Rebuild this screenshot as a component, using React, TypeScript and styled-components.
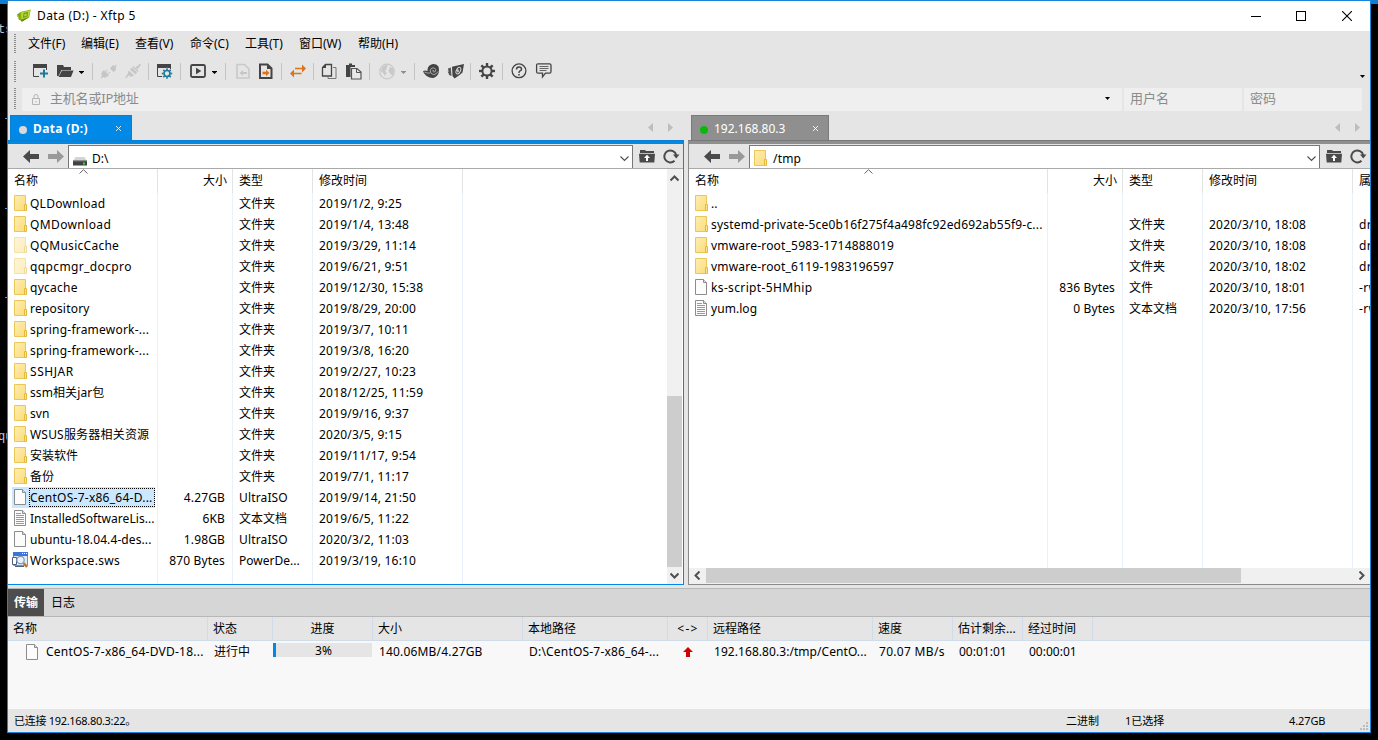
import React from "react";
import styled, { createGlobalStyle, css } from "styled-components";

const GlobalStyle = createGlobalStyle`
  html, body { margin: 0; padding: 0; background: #000; }
  body { width: 1378px; height: 740px; overflow: hidden; }
  * { box-sizing: border-box; }
  svg { display: block; flex: none; }
`;

/* ---------- shell ---------- */

const Desktop = styled.div`
  display: flex;
  width: 1378px;
  height: 740px;
  overflow: hidden;
  background: linear-gradient(#0e7fd3 4px, #000 4px);
  font-family: "Noto Sans", "Noto Sans CJK SC", sans-serif;
  font-size: 12px;
  line-height: 20px;
  color: #000;
  white-space: pre;
`;

const Terminal = styled.div`
  width: 7px;
  flex: none;
  overflow: hidden;
  display: flex;
  flex-direction: column;
  padding-top: 20px;
  font-family: "Liberation Mono", monospace;
  font-size: 12px;
  line-height: 20px;
  color: #c4c4d0;
`;

const TermLine = styled.span<{ $gap?: number }>`
  height: 20px;
  margin-left: -2px;
  margin-bottom: ${(p) => p.$gap ?? 0}px;
`;

const TermTick = styled.i<{ $gap: number }>`
  width: 2px;
  height: 1px;
  flex: none;
  align-self: flex-end;
  background: #5b8fc0;
  margin-bottom: ${(p) => p.$gap}px;
`;

const Window = styled.div`
  width: 1364px;
  height: 733px;
  flex: none;
  display: flex;
  flex-direction: column;
  background: #e5e5e5;
  border: 1px solid #1883d7;
  overflow: hidden;
`;

const T = styled.span<{ $ls?: number; $ml?: number }>`
  letter-spacing: ${(p) => p.$ls ?? 0}px;
  margin-left: ${(p) => p.$ml ?? 0}px;
  flex: none;
`;

/* ---------- title bar ---------- */

const TitleBar = styled.div`
  height: 30px;
  flex: none;
  display: flex;
  align-items: center;
  background: #fff;
  padding-left: 8px;
`;

const Title = styled(T)`
  margin-left: 5px;
  flex: 1;
`;

const Caption = styled.div`
  width: 46px;
  height: 30px;
  display: flex;
  align-items: center;
  justify-content: center;
`;

/* ---------- menu, toolbar, address bar ---------- */

const Grip = styled.i<{ $h: number; $mr: number }>`
  width: 2px;
  height: ${(p) => p.$h}px;
  flex: none;
  margin: 0 ${(p) => p.$mr}px 0 6px;
  background: repeating-linear-gradient(#8c8c8c 0 1px, #e5e5e5 1px 2px);
`;

const MenuBar = styled.div`
  height: 26px;
  flex: none;
  display: flex;
  align-items: center;
`;

const MenuItem = styled.span<{ $w: number }>`
  width: ${(p) => p.$w}px;
`;

const ToolBar = styled.div`
  height: 29px;
  flex: none;
  display: flex;
  align-items: center;
`;

const Tool = styled.span<{ $w: number; $dim?: boolean }>`
  width: ${(p) => p.$w}px;
  flex: none;
  color: ${(p) => (p.$dim ? "#c6c6c6" : "#444")};
`;

const Sep = styled.i<{ $w: number }>`
  width: ${(p) => p.$w}px;
  height: 17px;
  flex: none;
  background: linear-gradient(to right, #c3c3c3 1px, transparent 1px);
`;

const Overflow = styled.span`
  margin-left: auto;
  align-self: flex-end;
  padding: 0 5px 8px 0;
`;

const AddressBar = styled.div`
  height: 27px;
  flex: none;
  display: flex;
  align-items: center;
  padding-bottom: 1px;
`;

const AddrField = styled.div<{ $w: number; $pl: number }>`
  width: ${(p) => p.$w}px;
  height: 23px;
  flex: none;
  display: flex;
  align-items: center;
  margin-right: 2px;
  padding: 0 12px 2px ${(p) => p.$pl}px;
  background: #efefef;
  color: #8b8b8b;
  font-size: 13px;
`;

const LockSvg = styled.svg`
  margin-top: 3px;
`;

const Grow = styled.span`
  flex: 1;
`;

/* ---------- panes ---------- */

const Panes = styled.div`
  height: 472px;
  flex: none;
  display: flex;
`;

const Pane = styled.section<{ $w: number; $ml?: number }>`
  width: ${(p) => p.$w}px;
  margin-left: ${(p) => p.$ml ?? 0}px;
  flex: none;
  display: flex;
  flex-direction: column;
  min-width: 0;
`;

const TabRow = styled.div<{ $pl: number; $pr: number }>`
  height: 27px;
  flex: none;
  display: flex;
  align-items: flex-end;
  padding: 0 ${(p) => p.$pr}px 0 ${(p) => p.$pl}px;
`;

const Tab = styled.div<{ $w: number; $remote?: boolean }>`
  width: ${(p) => p.$w}px;
  height: 25px;
  display: flex;
  align-items: center;
  padding: 1px 10px 0 8px;
  color: #fff;
  background: ${(p) => (p.$remote ? "#8f8f8f" : "#0089e6")};
  border: 1px solid ${(p) => (p.$remote ? "#7a7a7a" : "#0a7fd0")};
  border-bottom: 0;
  font-weight: ${(p) => (p.$remote ? 400 : 700)};
`;

const Dot = styled.i<{ $c: string }>`
  width: 8px;
  height: 8px;
  margin: 2px 6px 0 0;
  border-radius: 50%;
  background: ${(p) => p.$c};
`;

const TabArrows = styled.div`
  margin-left: auto;
  height: 25px;
  display: flex;
  align-items: center;
  gap: 15px;
`;

const PaneFrame = styled.div<{ $remote?: boolean }>`
  flex: 1;
  min-height: 0;
  display: flex;
  flex-direction: column;
  border: 0 solid ${(p) => (p.$remote ? "#8a8a8a" : "#0089e6")};
  border-bottom-width: 1px;
  border-top: 1px solid ${(p) => (p.$remote ? "#777" : "#0a7fd0")};
  ${(p) =>
    p.$remote
      ? css`
          border-left-width: 1px;
        `
      : css`
          border-right-width: 1px;
        `}
`;

const Stripe = styled.i<{ $remote?: boolean }>`
  height: 3px;
  flex: none;
  background: ${(p) => (p.$remote ? "#8f8f8f" : "#0089e6")};
`;

const NavRow = styled.div<{ $pl: number }>`
  height: 25px;
  flex: none;
  display: flex;
  align-items: flex-end;
  padding-left: ${(p) => p.$pl}px;
  border-bottom: 1px solid #a9a9a9;
`;

const NavIcon = styled.span<{ $w: number }>`
  width: ${(p) => p.$w}px;
  height: 24px;
  flex: none;
  display: flex;
  align-items: center;
`;

const PathBox = styled.div<{ $w: number }>`
  width: ${(p) => p.$w}px;
  height: 23px;
  flex: none;
  display: flex;
  align-items: center;
  padding: 3px 3px 0 4px;
  background: #fff;
  border: 1px solid #777;
  border-bottom: 0;
`;

const PathIcon = styled.span<{ $mt: number; $mb: number }>`
  margin: ${(p) => p.$mt}px 0 ${(p) => p.$mb}px;
`;

const ListArea = styled.div`
  flex: 1;
  min-height: 0;
  display: flex;
  background: #fff;
`;

const List = styled.div`
  flex: 1;
  min-width: 0;
  display: flex;
  flex-direction: column;
  overflow: hidden;
`;

const Row = styled.div<{ $remote?: boolean; $kind?: "head" | "fill" }>`
  display: grid;
  grid-template-columns: ${(p) => (p.$remote ? 359 : 150)}px 75px 80px 150px 60px;
  flex: ${(p) => (p.$kind === "fill" ? "1" : "none")};
  height: ${(p) => (p.$kind === "fill" ? "auto" : p.$kind === "head" ? "24px" : "21px")};
`;

const Cell = styled.div<{ $right?: boolean; $head?: boolean; $last?: boolean }>`
  display: flex;
  align-items: center;
  justify-content: ${(p) => (p.$right ? "flex-end" : "flex-start")};
  padding: 0 ${(p) => (p.$head ? 5 : 7)}px 0 6px;
  border-right: ${(p) => (p.$last ? 0 : 1)}px solid ${(p) => (p.$head ? "#e3e3e3" : "#e8f1fc")};
`;

const NameCell = styled(Cell)`
  padding: 0 2px 0 4px;
`;

const HeadName = styled(Cell)`
  position: relative;
`;

const SortMark = styled.span`
  position: absolute;
  top: 0;
  left: 50%;
  margin-left: -4px;
`;

const NameBox = styled.div<{ $sel?: boolean }>`
  height: 21px;
  display: flex;
  align-items: center;
  background: ${(p) => (p.$sel ? "#cce8ff" : "transparent")};
`;

const NameText = styled.span<{ $sel?: boolean; $ls: number }>`
  height: 19px;
  line-height: 17px;
  width: ${(p) => (p.$sel ? "126px" : "auto")};
  letter-spacing: ${(p) => p.$ls}px;
  border: 1px dotted ${(p) => (p.$sel ? "#000" : "transparent")};
`;

const VScroll = styled.div`
  width: 15px;
  margin-right: 1px;
  flex: none;
  display: flex;
  flex-direction: column;
  background: #f0f0f0;
`;

const VThumb = styled.i`
  margin-top: 209px;
  height: 171px;
  background: #cdcdcd;
`;

const HScroll = styled.div`
  height: 16px;
  flex: none;
  display: flex;
  background: #f0f0f0;
`;

const HThumb = styled.i`
  width: 535px;
  height: 15px;
  background: #cdcdcd;
`;

const ScrollBtn = styled.span<{ $w: number; $h: number }>`
  width: ${(p) => p.$w}px;
  height: ${(p) => p.$h}px;
  flex: none;
  display: flex;
  align-items: center;
  justify-content: center;
`;

/* ---------- transfer panel ---------- */

const BottomTabs = styled.div`
  height: 29px;
  margin-top: 3px;
  flex: none;
  display: flex;
  border: solid #b7b7b7;
  border-width: 1px 0;
  background: #d6d6d6;
`;

const BottomTab = styled.span<{ $active?: boolean }>`
  padding: 4px ${(p) => (p.$active ? 6 : 7)}px 0;
  font-weight: ${(p) => (p.$active ? 700 : 400)};
  color: ${(p) => (p.$active ? "#fff" : "#000")};
  background: ${(p) => (p.$active ? "#4d4d4d" : "transparent")};
`;

const TRow = styled.div<{ $head?: boolean }>`
  display: grid;
  grid-template-columns: 200px 65px 100px 150px 145px 40px 165px 80px 70px 70px;
  height: ${(p) => (p.$head ? 24 : 21)}px;
  flex: none;
  border-bottom: ${(p) => (p.$head ? 1 : 0)}px solid #d0dcea;
`;

const TCell = styled.div<{ $head?: boolean; $pl?: number; $center?: boolean; $ls?: number }>`
  display: flex;
  align-items: center;
  justify-content: ${(p) => (p.$center ? "center" : "flex-start")};
  padding-left: ${(p) => p.$pl ?? 5}px;
  letter-spacing: ${(p) => p.$ls ?? 0}px;
  border-right: 1px solid ${(p) => (p.$head ? "#d0dcea" : "transparent")};
`;

const TBody = styled.div`
  flex: 1;
  background: #f8f8f8;
`;

const Progress = styled.div`
  width: 99px;
  height: 14px;
  margin-top: -3px;
  padding: 2px 0 0 2px;
  display: flex;
  align-items: center;
  justify-content: center;
  background: linear-gradient(to right, #0089e6 3px, #e5e5e5 3px);
`;

const StatusBar = styled.div`
  height: 23px;
  flex: none;
  display: flex;
  align-items: center;
  padding: 0 2px 0 6px;
  font-size: 11px;
`;

const StatusItem = styled.span<{ $w?: number; $ls?: number }>`
  width: ${(p) => (p.$w ? p.$w + "px" : "auto")};
  flex: ${(p) => (p.$w ? "none" : "1")};
  letter-spacing: ${(p) => p.$ls ?? 0}px;
`;

const ResizeGrip = styled.span`
  align-self: flex-end;
  margin-left: auto;
  padding-bottom: 2px;
`;

/* ---------- drawings ---------- */

const Logo = () => (
  <svg width="16" height="16" viewBox="0 0 16 16">
    <path d="M1 6.500 4.500 4 5 12 3 12Z" fill="#7da51c" />
    <path d="M.500 7.500 2.500 7.500 3.500 11.500Z" fill="#a7cf2a" />
    <path d="M4.300 4 14.800 1.500 13.200 9.500 5.500 13.500 3.800 11.500Z" fill="#86b115" />
    <path d="M5.300 4.500 14.300 2.300 12.500 8.800 5.500 11.500Z" fill="#b9dc3c" />
    <path d="M8 5.500 11.500 4.700 11 8 7.500 9.200Z" fill="none" stroke="#7ca414" strokeWidth="1.300" />
    <path d="M4.500 12 12.800 9.500 6 13.700Z" fill="#5f880f" />
  </svg>
);

const Caret = ({ c = "#000" }: { c?: string }) => (
  <svg width="5" height="17" viewBox="0 0 5 17">
    <path d="M0 8h5v.6L2.500 11 0 8.600Z" fill={c} />
  </svg>
);

const SmallCaret = () => (
  <svg width="5" height="3" viewBox="0 0 5 3">
    <path d="M0 0h5L2.500 3Z" fill="#000" />
  </svg>
);

const frame = (
  <>
    <path d="M1 1h14v4H1Z" fill="#444" />
    <path d="M1.500 4v9.500H7M14.500 4v3" stroke="#444" fill="none" />
  </>
);

const gearTeeth = (cx: number, cy: number, r0: number, r1: number, w: number) =>
  [0, 45, 90, 135, 180, 225, 270, 315].map((a) => (
    <path
      key={a}
      d={`M${cx} ${cy - r0}V${cy - r1}`}
      strokeWidth={w}
      transform={`rotate(${a} ${cx} ${cy})`}
    />
  ));

const icons: Record<string, React.ReactNode> = {
  newWindow: (
    <>
      {frame}
      <path d="M11 6.500h2v8h-2ZM8 9.500h8v2H8Z" fill="#1b7b9c" />
    </>
  ),
  open: (
    <>
      <path d="M0 2h6l1 2h7v3H4.500L1.500 13H0Z" fill="#444" />
      <path d="M5 7.500h11.500L14 14H1.500Z" fill="#444" />
    </>
  ),
  link: (
    <g fill="currentColor">
      <path d="M10 5.500 13 2l1.500 1.200L16 1.500l.8.8-1.200 1.800Q17 6 15 8l-1.500 1Z" />
      <path d="m2.500 8.500 1.500-1.500 5 5-1.500 1.500Q5 15.500 3.200 14L1.500 15.500.700 14.700 2 13Q.500 11 2.500 8.500Z" />
      <path d="m5.500 8 1.500-1.500.8.8L6.500 8.800ZM8 10.300l1.500-1.500.8.8L8.800 11Z" />
    </g>
  ),
  unlink: (
    <g fill="currentColor">
      <path d="M7 4.500 12 9.500 10.500 11.500 5 6.500ZM10.500 4.500 15 .700 16 1.700 12.200 6.500ZM5 10.500 1.200 15.500.200 14.500 3.500 9.500Z" />
      <path d="M8.500 3 13.500 8l-1 1-5-5ZM4 7.500 9 12.500 7 13.500Q5 14 3.500 12T4 7.500Z" />
    </g>
  ),
  winGear: (
    <>
      {frame}
      <circle cx="11" cy="10.500" r="5.800" fill="#e5e5e5" />
      <g stroke="#1b7b9c" fill="none">
        <circle cx="11" cy="10.500" r="3" strokeWidth="1.700" />
        {gearTeeth(11, 10.5, 3.5, 5.2, 1.6)}
      </g>
    </>
  ),
  play: (
    <>
      <rect x="1" y="2" width="14" height="12" rx="1.500" fill="none" stroke="#444" strokeWidth="1.800" />
      <path d="M6 4.700 11.300 8 6 11.300Z" fill="#444" />
    </>
  ),
  docIn: (
    <>
      <path d="M1 1.500h7.500L13 6v9H1Z" fill="none" stroke="#c9c9c9" strokeWidth="1.600" />
      <path d="M3.500 10 7 7v2h4v2H7v2Z" fill="#c6c6c6" />
    </>
  ),
  docOut: (
    <>
      <path d="M1 1.500h7.500L12.500 5.500V15H1Z" fill="none" stroke="#444" strokeWidth="2" />
      <path d="M8 1v5h5Z" fill="#444" />
      <path d="M10.500 10 7 6.800v2H3.500v2.400H7v2Z" fill="#de7417" />
    </>
  ),
  swap: (
    <g fill="#de7417">
      <path d="M16 5.500 12 1.500v3.200H5v1.600H12v3.200Z" />
      <path d="M0 10.500 4 6.500v3.200h7.500v1.600H4v3.200Z" />
    </g>
  ),
  copy: (
    <>
      <path d="M4.500 1.500H10.500V13H1.500V4.500Z" fill="none" stroke="#444" strokeWidth="1.300" />
      <path d="M1 5 5 1v4Z" fill="#444" />
      <path d="M12 4.500h3V15.500H7V14" fill="none" stroke="#777" />
    </>
  ),
  paste: (
    <>
      <path d="M0 2h3V.500h3V2h3v2H4.500v10H0Z" fill="#444" />
      <path d="M5.500 5.500H11L15 9v7H5.500Z" fill="#e9e9e9" stroke="#555" strokeWidth="1.200" />
      <path d="M10.500 5.500V9.500H15" fill="none" stroke="#555" />
    </>
  ),
  globe: (
    <>
      <circle cx="8" cy="8.500" r="7.300" fill="none" stroke="#c9c9c9" strokeWidth="1.200" />
      <path d="M3 4.500 6.500 2 9 2.500 7.500 4.500 8 6 6 7.500 7.500 9.500 6 13 4.500 10.500 1.500 8ZM11 4l3 1 1 4-1.500 3.500L11 10.500 9.500 8Z" fill="#c9c9c9" />
    </>
  ),
  shell: (
    <>
      <path d="M0 8.500Q1 7 4.500 8 4 3 9 1.200 13 .500 15.500 3.500L16 7Q16 13 10.500 15 3.500 15.500 0 8.500Z" fill="#444" />
      <path d="M10.700 7.500Q9.500 6.700 9.800 8.200 10.600 9.700 12.300 8.500 13.600 6.500 11.500 5 8.500 4 7.200 7 7 11 10.500 11.700 13.500 11.500 15 8.500M1.500 9Q4 10.500 7 10" fill="none" stroke="#c0c0c0" strokeWidth=".8" />
    </>
  ),
  leaf: (
    <>
      <path d="M4 3.800 16 1 14.500 9.500Q12 12 6.500 15.500L4.500 13Z" fill="#444" />
      <path d="M0 5.500 2.800 4.500 3.500 13 1 12ZM-.500 8.500 1.500 9.500V12Z" fill="#555" />
      <ellipse cx="10.200" cy="7.500" rx="2" ry="3.600" transform="rotate(25 10 8)" fill="none" stroke="#ddd" />
      <path d="M9.900 6v3.500M8.800 8h2.300" stroke="#ddd" />
    </>
  ),
  gear: (
    <g stroke="#444" fill="none">
      <circle cx="8" cy="8" r="4.600" strokeWidth="2" />
      {gearTeeth(8, 8, 5, 8, 2.4)}
    </g>
  ),
  help: (
    <>
      <circle cx="8" cy="7.800" r="6.900" fill="none" stroke="#444" strokeWidth="1.300" />
      <path d="M5.500 6.500Q5.500 4 8 4T10.500 6.200Q10.500 7.300 8.700 8.200 8 8.600 8 10" fill="none" stroke="#444" strokeWidth="1.500" />
      <path d="M7.200 11h1.600v1.500H7.200Z" fill="#444" />
    </>
  ),
  chat: (
    <>
      <path d="M2 .8H13.500Q15 .8 15 2.300V8.700Q15 10.200 13.500 10.200H9.500L6.500 14V10.200H2Q.600 10.200.600 8.700V2.300Q.600.8 2 .8Z" fill="none" stroke="#444" strokeWidth="1.300" />
      <path d="M3.500 3.500h9M3.500 5.500h9M3.500 7.500h7" stroke="#555" strokeWidth=".9" />
    </>
  ),
};

const Icon = ({ n }: { n: string }) => (
  <svg width="18" height="17" viewBox="0 0 18 17" overflow="visible">
    {icons[n]}
  </svg>
);

const Folder = () => (
  <svg width="14" height="16" viewBox="0 0 14 16">
    <defs>
      <linearGradient id="fold" x1="0" y1="0" x2="1" y2="1">
        <stop offset="0" stopColor="#ffeeb0" />
        <stop offset="1" stopColor="#fbdc7b" />
      </linearGradient>
    </defs>
    <path d="M.500.500H11.500V15.500H.500Z" fill="url(#fold)" stroke="#ebc75a" />
    <path d="M10.500 9.500H12.500V15.500H10.500Z" fill="#fde58e" stroke="#e5b93c" />
  </svg>
);

const Faded = styled.span`
  display: block;
  opacity: 0.5;
`;

const FileIcon = ({ lines }: { lines?: boolean }) => (
  <svg width="14" height="16" viewBox="0 0 14 16">
    <path d="M.500.500H8.500L11.500 3.500V15.500H.500Z" fill="#fcfcfc" stroke="#8c8c8c" />
    <path d="M8.500.500V3.500H11.500" fill="#ddd" stroke="#8c8c8c" />
    {lines && <path d="M2 3.500h5M2 5.500h8M2 7.500h8M2 9.500h8M2 11.500h8M2 13.500h8" stroke="#999" />}
  </svg>
);

const AppFile = () => (
  <svg width="16" height="16" viewBox="0 0 16 16">
    <path d="M1.500.500H15.500V13.500H1.500Z" fill="#dfeafa" stroke="#6d8fd0" />
    <path d="M1 0H16V4H1Z" fill="#3e74d8" />
    <path d="M10 1.500h1M12 1.500h1M14 1.500h1" stroke="#fff" />
    <path d="M.500 5.500h4v7h-4Z" fill="#fff" stroke="#4c5f86" />
    <path d="m11.500 11 3.500 4" stroke="#b87a30" strokeWidth="2.500" />
    <path d="M3 14.500h9" stroke="#55617c" />
    <circle cx="8.500" cy="8" r="3.700" fill="#e6f3fd" stroke="#8796b0" strokeWidth="1.200" />
  </svg>
);

const Drive = () => (
  <svg width="14" height="9" viewBox="0 0 14 9">
    <path d="M2.500 0H11.500L14 4H0Z" fill="#d3d5d7" />
    <path d="M0 3.500H14V8.500H0Z" fill="#3f4243" />
    <path d="M0 3.500H14V4.300H0Z" fill="#8e9294" />
    <path d="M10 5.500h2v2h-2Z" fill="#35d845" />
  </svg>
);

const Arrow = ({ right }: { right?: boolean }) => (
  <svg width="16" height="13" viewBox="0 0 16 13">
    <path
      d="M0 6.500 7 0V4H16V9H7V13Z"
      fill={right ? "#999" : "#4a4a4a"}
      transform={right ? "matrix(-1 0 0 1 16 0)" : undefined}
    />
  </svg>
);

const UpFolder = () => (
  <svg width="16" height="13" viewBox="0 0 16 13">
    <path d="M1 0H6L7 1H15V3H1ZM0 3.800H16L15.300 12.500H.700Z" fill="#4a4a4a" />
    <path d="M8 4.800 11 8H9v3H7V8H5Z" fill="#fff" />
  </svg>
);

const Refresh = () => (
  <svg width="17" height="16" viewBox="0 0 17 16">
    <path d="M11.500 12.800A6 6 0 1 1 13.200 7" fill="none" stroke="#4a4a4a" strokeWidth="2" />
    <path d="M10 6.500H16.500L13.200 10.500Z" fill="#4a4a4a" />
  </svg>
);

const Chevron = ({ a = 0, c = "#505050", w = 1.2, s = 9 }: { a?: number; c?: string; w?: number; s?: number }) => (
  <svg width={s} height={s} viewBox="0 0 9 9">
    <path d="M.500 2.500 4.500 6.500 8.500 2.500" fill="none" stroke={c} strokeWidth={w} transform={`rotate(${a} 4.500 4.500)`} />
  </svg>
);

const SortUp = () => (
  <svg width="9" height="5" viewBox="0 0 9 5">
    <path d="M.500 4.500 4.500.700 8.500 4.500" fill="none" stroke="#666" />
  </svg>
);

const Cross = ({ s, c }: { s: number; c: string }) => (
  <svg width={s} height={s} viewBox="0 0 10 10">
    <path d="m0 0 10 10M10 0 0 10" stroke={c} strokeWidth={s > 7 ? 1.1 : 1.7} />
  </svg>
);

const Triangle = ({ right }: { right?: boolean }) => (
  <svg width="5" height="9" viewBox="0 0 5 9">
    <path d={right ? "M0 0V9L5 4.500Z" : "M5 0V9L0 4.500Z"} fill="#bdbdbd" />
  </svg>
);

/* ---------- data ---------- */

type Kind = "folder" | "faded" | "file" | "text" | "app";
interface Entry {
  kind: Kind;
  name: string;
  size?: string;
  type?: string;
  date?: string;
  attr?: string;
  sel?: boolean;
  ls?: number;
}

const dir = (name: string, date: string, ls?: number, kind: Kind = "folder"): Entry => ({
  kind,
  name,
  date,
  type: "文件夹",
  ls,
});

const localFiles: Entry[] = [
  dir("QLDownload", "2019/1/2, 9:25", 0.25),
  dir("QMDownload", "2019/1/4, 13:48", 0.38),
  dir("QQMusicCache", "2019/3/29, 11:14", 0.27, "faded"),
  dir("qqpcmgr_docpro", "2019/6/21, 9:51", 0.38, "faded"),
  dir("qycache", "2019/12/30, 15:38", 0.25),
  dir("repository", "2019/8/29, 20:00", 0.2),
  dir("spring-framework-...", "2019/3/7, 10:11", 0.22),
  dir("spring-framework-...", "2019/3/8, 16:20", 0.22),
  dir("SSHJAR", "2019/2/27, 10:23", 0.55),
  dir("ssm相关jar包", "2018/12/25, 11:59", 0.1),
  dir("svn", "2019/9/16, 9:37", 0.1),
  dir("WSUS服务器相关资源", "2020/3/5, 9:15", 0.2),
  dir("安装软件", "2019/11/17, 9:54", 0),
  dir("备份", "2019/7/1, 11:17", 0),
  { kind: "file", name: "CentOS-7-x86_64-D...", size: "4.27GB", type: "UltraISO", date: "2019/9/14, 21:50", sel: true, ls: 0.25 },
  { kind: "text", name: "InstalledSoftwareLis...", size: "6KB", type: "文本文档", date: "2019/6/5, 11:22", ls: 0.05 },
  { kind: "file", name: "ubuntu-18.04.4-des...", size: "1.98GB", type: "UltraISO", date: "2020/3/2, 11:03", ls: 0.1 },
  { kind: "app", name: "Workspace.sws", size: "870 Bytes", type: "PowerDe...", date: "2019/3/19, 16:10", ls: 0.3 },
];

const remoteFiles: Entry[] = [
  { kind: "folder", name: ".." },
  { ...dir("systemd-private-5ce0b16f275f4a498fc92ed692ab55f9-c...", "2020/3/10, 18:08", 0.195), attr: "drwx" },
  { ...dir("vmware-root_5983-1714888019", "2020/3/10, 18:08", 0.2), attr: "drwx" },
  { ...dir("vmware-root_6119-1983196597", "2020/3/10, 18:02", 0.2), attr: "drwx" },
  { kind: "file", name: "ks-script-5HMhip", size: "836 Bytes", type: "文件", date: "2020/3/10, 18:01", attr: "-rw-", ls: 0.36 },
  { kind: "text", name: "yum.log", size: "0 Bytes", type: "文本文档", date: "2020/3/10, 17:56", attr: "-rw-", ls: 0.05 },
];

const IconBox = styled.span<{ $wide?: boolean }>`
  width: 17px;
  padding-left: ${(p) => (p.$wide ? 0 : 2)}px;
  padding-bottom: 1px;
  flex: none;
`;

const glyph = (k: Kind) =>
  k === "folder" ? <Folder /> : k === "faded" ? <Faded><Folder /></Faded> : k === "app" ? <AppFile /> : <FileIcon lines={k === "text"} />;

const FileList = ({ files, remote }: { files: Entry[]; remote?: boolean }) => (
  <List>
    <Row $kind="head" $remote={remote}>
      <HeadName $head>
        <SortMark>
          <SortUp />
        </SortMark>
        名称
      </HeadName>
      <Cell $head $right>大小</Cell>
      <Cell $head>类型</Cell>
      <Cell $head>修改时间</Cell>
      <Cell $last>{remote ? "属性" : ""}</Cell>
    </Row>
    {files.map((f, i) => (
      <Row key={i} $remote={remote}>
        <NameCell>
          <NameBox $sel={f.sel}>
            <IconBox $wide={f.kind === "app"}>{glyph(f.kind)}</IconBox>
            <NameText $sel={f.sel} $ls={f.ls ?? 0.1}>{f.name}</NameText>
          </NameBox>
        </NameCell>
        <Cell $right><T $ls={0.15}>{f.size}</T></Cell>
        <Cell><T $ls={f.type === "UltraISO" ? 0.15 : 0}>{f.type}</T></Cell>
        <Cell><T $ls={0.2}>{f.date}</T></Cell>
        <Cell $last><T $ls={0.4}>{f.attr}</T></Cell>
      </Row>
    ))}
    <Row $kind="fill" $remote={remote}>
      <Cell />
      <Cell />
      <Cell />
      <Cell />
      <Cell $last />
    </Row>
  </List>
);

const menus: [string, number][] = [
  ["文件(F)", 53],
  ["编辑(E)", 54],
  ["查看(V)", 55],
  ["命令(C)", 55],
  ["工具(T)", 54],
  ["窗口(W)", 59],
  ["帮助(H)", 60],
];

const tools: [string, number][] = [
  ["newWindow", 25], ["open", 22], ["caret", 13], ["sep", 8],
  ["link", 25], ["unlink", 23], ["sep", 8],
  ["winGear", 24], ["sep", 10],
  ["play", 22], ["caret", 13], ["sep", 11],
  ["docIn", 23], ["docOut", 22], ["sep", 9],
  ["swap", 23], ["sep", 8],
  ["copy", 25], ["paste", 23], ["sep", 10],
  ["globe", 22], ["caretDim", 13], ["sep", 9],
  ["shell", 25], ["leaf", 22], ["sep", 9],
  ["gear", 23], ["sep", 9],
  ["help", 25], ["chat", 20],
];

export default function App() {
  return (
    <>
      <GlobalStyle />
      <Desktop>
        <Terminal>
          <TermLine $gap={78}>ts</TermLine>
          <TermTick $gap={89} />
          <TermTick $gap={88} />
          <TermTick $gap={129} />
          <TermLine>qu</TermLine>
        </Terminal>
        <Window>
          <TitleBar>
            <Logo />
            <Title $ls={0.38}>Data (D:) - Xftp 5</Title>
            <Caption>
              <svg width="12" height="10"><path d="M2 5.500h10" stroke="#000" /></svg>
            </Caption>
            <Caption>
              <svg width="10" height="10"><rect x=".5" y=".5" width="9" height="9" fill="none" stroke="#000" /></svg>
            </Caption>
            <Caption>
              <Cross s={10} c="#000" />
            </Caption>
          </TitleBar>

          <MenuBar>
            <Grip $h={20} $mr={12} />
            {menus.map(([m, w]) => (
              <MenuItem key={m} $w={w}>{m}</MenuItem>
            ))}
          </MenuBar>

          <ToolBar>
            <Grip $h={22} $mr={16} />
            {tools.map(([n, w], i) =>
              n === "sep" ? (
                <Sep key={i} $w={w} />
              ) : (
                <Tool key={i} $w={w} $dim={n === "link" || n === "unlink"}>
                  {n === "caret" ? <Caret /> : n === "caretDim" ? <Caret c="#8e8e8e" /> : <Icon n={n} />}
                </Tool>
              )
            )}
            <Overflow><SmallCaret /></Overflow>
          </ToolBar>

          <AddressBar>
            <Grip $h={22} $mr={6} />
            <AddrField $w={1100} $pl={10}>
              <LockSvg width="8" height="11" viewBox="0 0 8 11">
                <path d="M.500 4.500h7v6h-7ZM2 4.500V2Q2 .500 4 .500T6 2v2.500M4 7v1.500" fill="none" stroke="#b5b5b5" />
              </LockSvg>
              <T $ls={-0.2} $ml={10}>主机名或IP地址</T>
              <Grow />
              <SmallCaret />
            </AddrField>
            <AddrField $w={118} $pl={6}>用户名</AddrField>
            <AddrField $w={118} $pl={6}>密码</AddrField>
          </AddressBar>

          <Panes>
            <Pane $w={676}>
              <TabRow $pl={2} $pr={11}>
                <Tab $w={122}>
                  <Dot $c="#d9d9d9" />
                  <T $ls={0.35}>Data (D:)</T>
                  <Grow />
                  <Cross s={5} c="#fff" />
                </Tab>
                <TabArrows><Triangle /><Triangle right /></TabArrows>
              </TabRow>
              <PaneFrame>
                <Stripe />
                <NavRow $pl={15}>
                  <NavIcon $w={25}><Arrow /></NavIcon>
                  <NavIcon $w={20}><Arrow right /></NavIcon>
                  <PathBox $w={565}>
                    <PathIcon $mt={5} $mb={0}><Drive /></PathIcon>
                    <T $ml={5}>{"D:\\"}</T>
                    <Grow />
                    <Chevron />
                  </PathBox>
                  <NavIcon $w={6} />
                  <NavIcon $w={24}><UpFolder /></NavIcon>
                  <NavIcon $w={17}><Refresh /></NavIcon>
                </NavRow>
                <ListArea>
                  <FileList files={localFiles} />
                  <VScroll>
                    <ScrollBtn $w={15} $h={18}><Chevron a={180} w={2} /></ScrollBtn>
                    <VThumb />
                    <ScrollBtn $w={15} $h={17}><Chevron w={2} /></ScrollBtn>
                  </VScroll>
                </ListArea>
              </PaneFrame>
            </Pane>

            <Pane $w={682} $ml={4}>
              <TabRow $pl={3} $pr={10}>
                <Tab $w={138} $remote>
                  <Dot $c="#0db80d" />
                  <T>192.168.80.3</T>
                  <Grow />
                  <Cross s={5} c="#fff" />
                </Tab>
                <TabArrows><Triangle /><Triangle right /></TabArrows>
              </TabRow>
              <PaneFrame $remote>
                <Stripe $remote />
                <NavRow $pl={15}>
                  <NavIcon $w={25}><Arrow /></NavIcon>
                  <NavIcon $w={20}><Arrow right /></NavIcon>
                  <PathBox $w={571}>
                    <PathIcon $mt={0} $mb={1}><Folder /></PathIcon>
                    <T $ml={5} $ls={0.2}>/tmp</T>
                    <Grow />
                    <Chevron />
                  </PathBox>
                  <NavIcon $w={6} />
                  <NavIcon $w={24}><UpFolder /></NavIcon>
                  <NavIcon $w={17}><Refresh /></NavIcon>
                </NavRow>
                <ListArea>
                  <FileList files={remoteFiles} remote />
                </ListArea>
                <HScroll>
                  <ScrollBtn $w={17} $h={15}><Chevron a={90} w={2} /></ScrollBtn>
                  <HThumb />
                  <Grow />
                  <ScrollBtn $w={17} $h={15}><Chevron a={-90} w={2} /></ScrollBtn>
                </HScroll>
              </PaneFrame>
            </Pane>
          </Panes>

          <BottomTabs>
            <BottomTab $active>传输</BottomTab>
            <BottomTab>日志</BottomTab>
          </BottomTabs>
          <TRow $head>
            <TCell $head>名称</TCell>
            <TCell $head>状态</TCell>
            <TCell $head $center $pl={0}>进度</TCell>
            <TCell $head>大小</TCell>
            <TCell $head>本地路径</TCell>
            <TCell $head $center $pl={1} $ls={1.3}>{"<->"}</TCell>
            <TCell $head>远程路径</TCell>
            <TCell $head>速度</TCell>
            <TCell $head>估计剩余...</TCell>
            <TCell $head>经过时间</TCell>
          </TRow>
          <TBody>
            <TRow>
              <TCell $pl={18}>
                <FileIcon />
                <T $ls={0.25} $ml={6}>CentOS-7-x86_64-DVD-18...</T>
              </TCell>
              <TCell $pl={6}>进行中</TCell>
              <TCell $pl={0}><Progress>3%</Progress></TCell>
              <TCell $pl={6} $ls={0.17}>140.06MB/4.27GB</TCell>
              <TCell $pl={6} $ls={0.2}>D:\CentOS-7-x86_64-...</TCell>
              <TCell $center $pl={0}>
                <svg width="10" height="10" viewBox="0 0 10 10">
                  <path d="M5 0 10 5H7v5H3V5H0Z" fill="#d00000" />
                </svg>
              </TCell>
              <TCell $pl={6} $ls={0.06}>192.168.80.3:/tmp/CentO...</TCell>
              <TCell $pl={6} $ls={0.3}>70.07 MB/s</TCell>
              <TCell $pl={6}>00:01:01</TCell>
              <TCell $pl={6}>00:00:01</TCell>
            </TRow>
          </TBody>
          <StatusBar>
            <StatusItem $ls={-0.3}>已连接 192.168.80.3:22。</StatusItem>
            <StatusItem $w={59}>二进制</StatusItem>
            <StatusItem $w={164}>1已选择</StatusItem>
            <StatusItem $w={71} $ls={-0.1}>4.27GB</StatusItem>
            <ResizeGrip>
              <svg width="8" height="8">
                <path d="M6 0h2v2H6ZM3 3h2v2H3ZM6 3h2v2H6ZM0 6h2v2H0ZM3 6h2v2H3ZM6 6h2v2H6Z" fill="#bdbdbd" />
              </svg>
            </ResizeGrip>
          </StatusBar>
        </Window>
      </Desktop>
    </>
  );
}
